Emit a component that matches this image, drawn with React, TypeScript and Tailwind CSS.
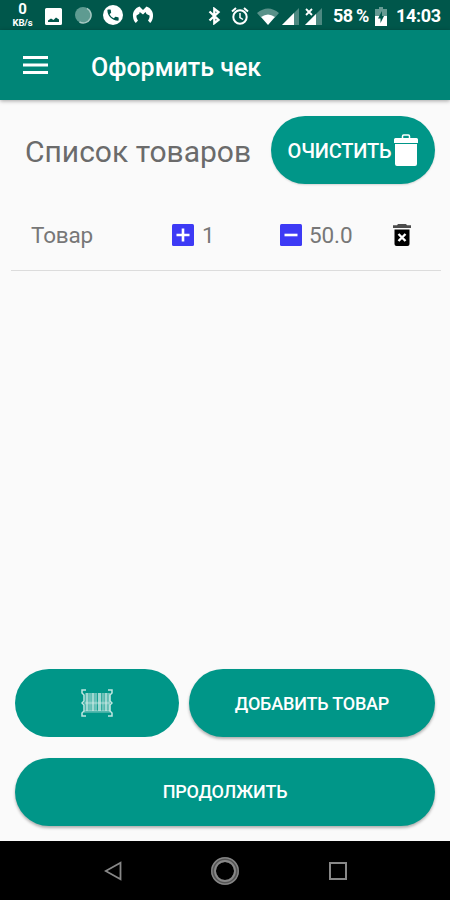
import { ButtonHTMLAttributes, FC, SVGProps } from 'react';
import { clsx } from 'clsx';

interface IProduct {
  name: string;
  count: number;
  price: number;
}

const PRODUCTS: IProduct[] = [{ name: 'Товар', count: 1, price: 50 }];

const Svg: FC<SVGProps<SVGSVGElement>> = ({ children, ...props }) => (
  <svg fill="currentColor" aria-hidden="true" {...props}>
    {children}
  </svg>
);

const StatusBar: FC = () => (
  <div className="h-[30px] shrink-0 bg-[#00574b] text-white flex items-center justify-between pl-3 pr-[10px]">
    <div className="flex items-center">
      <div className="w-[21px] flex flex-col items-center font-bold">
        <span className="text-[15px] leading-[15px]">0</span>
        <span className="text-[9.500px] leading-[11px] tracking-[-0.1px]">
          KB/s
        </span>
      </div>
      <Svg className="ml-3 mt-[2px]" width="17" height="17" viewBox="0 0 17 17">
        <path
          fillRule="evenodd"
          d="M1.500 0h14a1.500 1.500 0 0 1 1.500 1.500v14a1.500 1.500 0 0 1-1.500 1.500h-14A1.500 1.500 0 0 1 0 15.500v-14A1.500 1.500 0 0 1 1.500 0ZM3 14h11V11.500L11 9.500 8.500 12 6 10.500 3 12.500Z"
        />
      </Svg>
      <Svg className="ml-3" width="18" height="18" viewBox="0 0 18 18">
        <circle cx="9" cy="9" r="8" fill="#5e9b91" />
        <path
          d="M13 2.300A7.800 7.800 0 0 1 5.500 16"
          fill="none"
          stroke="#a9cbc5"
          strokeWidth="1.500"
        />
      </Svg>
      <Svg className="ml-[11px]" width="20" height="20" viewBox="0 0 20 20">
        <circle cx="10" cy="10" r="10" />
        <path
          transform="translate(2.500 2.500) scale(.625)"
          fill="#00574b"
          d="M6.620 10.790c1.440 2.830 3.760 5.140 6.590 6.590l2.200-2.200c.27-.27.67-.36 1.020-.24 1.120.37 2.330.57 3.570.57.55 0 1 .45 1 1V20c0 .55-.45 1-1 1C10.610 21 3 13.390 3 4c0-.55.45-1 1-1h3.500c.55 0 1 .45 1 1 0 1.250.2 2.450.57 3.570.11.35.03.74-.25 1.020z"
        />
      </Svg>
      <Svg className="ml-[9px]" width="22" height="20" viewBox="0 0 22 20">
        <path d="M7.500 1.500C3 3 .5 7 1 11.500c.2 2.800 1.200 5 2.800 6.500L6 15.500C4.800 14 4.200 12 4.500 10.500l2.800-1.700.4-1.800L11 9.500l2.500-2.500 1 2 3 1.500c.3 1.500-.3 3.500-1.500 5l2.200 2.500c1.600-1.500 2.600-3.700 2.800-6.500C21.500 7 19 3 14.500 1.500L11 5Z" />
      </Svg>
    </div>
    <div className="flex items-center">
      <Svg
        className="mt-[2px]"
        width="13"
        height="18"
        viewBox="0 0 13 18"
        fill="none"
        stroke="currentColor"
        strokeWidth="2.300"
      >
        <path d="M1.500 4.500 10.500 13 6.300 16.200V1.800L10.500 5 1.500 13.500" />
      </Svg>
      <Svg
        className="ml-[10px] mt-px"
        width="18"
        height="18"
        viewBox="0 0 18 18"
        fill="none"
        stroke="currentColor"
        strokeWidth="2"
      >
        <circle cx="9" cy="10" r="6.700" />
        <path d="M1 4.500 5 1M17 4.500 13 1" />
        <path d="M9 6v4.500l3 2" strokeWidth="1.500" />
      </Svg>
      <Svg className="ml-2 mt-[2px]" width="22" height="17" viewBox="0 0 22 17">
        <path d="M0 5Q11-4 22 5l-4 4.500Q11 5 4 9.500Z" opacity=".35" />
        <path d="M4 9q7-5 14 0l-7 8Z" />
      </Svg>
      <Svg className="ml-[3px] mt-[2px]" width="17" height="17" viewBox="0 0 17 17">
        <path d="M17 0v17H0Z" opacity=".3" />
        <path d="M12 5v12H0Z" />
      </Svg>
      <Svg className="ml-[6px] mt-[2px]" width="17" height="17" viewBox="0 0 17 17">
        <path d="M17 0v17H0Z" opacity=".3" />
        <path d="M11 6v11H0Z" />
        <path
          d="M1 1 7 7M7 1 1 7"
          stroke="currentColor"
          strokeWidth="1.800"
        />
      </Svg>
      <span className="ml-[11px] w-[37px] mt-[2px] text-[18px] leading-none font-bold whitespace-nowrap tracking-[-0.7px]">
        58 %
      </span>
      <Svg className="ml-[5px] mt-[2px]" width="12" height="19" viewBox="0 0 12 19">
        <path d="M4 0h4v2h4v8H0V2h4Z" opacity=".4" />
        <path d="M0 9h12v10H0Z" />
        <path d="M7 4 3 11.500h2.500V16L9 9H7Z" fill="#00574b" />
      </Svg>
      <span className="ml-[9px] w-[44px] mt-[2px] text-[18px] leading-none font-bold whitespace-nowrap tracking-[-0.3px]">
        14:03
      </span>
    </div>
  </div>
);

const AppBar: FC = () => (
  <header className="h-[70px] shrink-0 bg-[#008577] text-white flex items-center shadow-[0_1px_4px_rgba(0,0,0,0.35)]">
    <button aria-label="Меню" className="ml-[23px]">
      <Svg width="25" height="18" viewBox="0 0 25 18">
        <path d="M0 0h25v3H0ZM0 7.500h25v3H0ZM0 15h25v3H0Z" />
      </Svg>
    </button>
    <h1 className="ml-[43px] mt-[5px] text-[25px] font-medium whitespace-nowrap">
      Оформить чек
    </h1>
  </header>
);

const PillButton: FC<ButtonHTMLAttributes<HTMLButtonElement>> = ({
  children,
  className,
  ...props
}) => (
  <button
    {...props}
    className={clsx(
      'h-[68px] rounded-full bg-[#009688] text-white font-medium whitespace-nowrap flex items-center justify-center',
      className
    )}
  >
    {children}
  </button>
);

const TrashIcon: FC = () => (
  <Svg width="24" height="32" viewBox="0 0 24 32">
    <path
      d="M8.500 4V2.200Q8.500 1 9.700 1h4.600q1.200 0 1.200 1.200V4"
      fill="none"
      stroke="currentColor"
      strokeWidth="1.500"
    />
    <path d="M1.500 4h21Q24 4 24 5.500V9H0V5.500Q0 4 1.500 4ZM1 10h22v20q0 2-2 2H3q-2 0-2-2Z" />
  </Svg>
);

const BarcodeIcon: FC = () => (
  <Svg width="32" height="28" viewBox="0 0 32 28" fill="none" stroke="#d5eeea">
    <path
      d="M5 1H1v3l2 2v6l-2 2 2 2v6l-2 2v3h4M27 1h4v3l-2 2v6l2 2-2 2v6l2 2v3h-4"
      strokeWidth="1.500"
      opacity=".9"
    />
    <path d="M6 4v18M12 4v18M18.500 4v18M25 4v18" strokeWidth="3" opacity=".75" />
    <path d="M9 4v18M15 4v18M21.800 4v18M28 4v18" strokeWidth="2.500" opacity=".5" />
    <path d="M3 22.500h26M3 14h26" strokeWidth="2.500" opacity=".4" />
  </Svg>
);

const CounterIcon: FC<{ path: string }> = ({ path }) => (
  <Svg width="22" height="22" viewBox="0 0 22 22">
    <rect width="22" height="22" rx="1.500" fill="#3d3af5" />
    <path d={path} stroke="white" strokeWidth="2.600" />
  </Svg>
);

const ProductRow: FC<{ product: IProduct }> = ({ product }) => (
  <li className="h-[71px] ml-[11px] mr-[9px] pl-5 border-b border-[#dcdcdc] flex items-center text-[#777] text-[22.500px]">
    <span className="w-[141px] mt-[2px] tracking-[-0.2px]">{product.name}</span>
    <button aria-label="Добавить" className="mb-px">
      <CounterIcon path="M11 4.500v13M4.500 11h13" />
    </button>
    <span className="ml-2 mt-[2px] w-[78px]">{product.count}</span>
    <button aria-label="Убавить" className="mb-px">
      <CounterIcon path="M4.500 11h13" />
    </button>
    <span className="ml-[7px] mt-[2px] w-[84px] tracking-[-0.1px]">
      {product.price.toFixed(1)}
    </span>
    <button aria-label="Удалить" className="mb-px text-black">
      <Svg width="18" height="22" viewBox="0 0 18 22">
        <path d="M5 0h8l1 1.200h4V4H0V1.200h4Z" opacity=".7" />
        <path d="M1.500 5.500h15V20q0 2-2 2h-11q-2 0-2-2Z" />
        <path
          d="m5.500 10 7 7M12.500 10l-7 7"
          stroke="white"
          strokeWidth="2.400"
        />
      </Svg>
    </button>
  </li>
);

const NavigationBar: FC = () => (
  <nav className="h-[59px] shrink-0 bg-black text-[#888] flex items-center">
    <Svg
      className="ml-[104px]"
      width="18"
      height="20"
      viewBox="0 0 18 20"
      fill="none"
      stroke="currentColor"
      strokeWidth="1.800"
    >
      <path d="M16.500 1.700v16.600L1.700 10Z" />
    </Svg>
    <Svg
      className="ml-[89px]"
      width="28"
      height="28"
      viewBox="0 0 28 28"
      fill="none"
      stroke="currentColor"
    >
      <circle cx="14" cy="14" r="11.500" strokeWidth="5" stroke="#555" />
      <circle cx="14" cy="14" r="13.200" strokeWidth="1.300" />
      <circle cx="14" cy="14" r="10" strokeWidth="1.800" />
    </Svg>
    <Svg
      className="ml-[90px]"
      width="18"
      height="18"
      viewBox="0 0 18 18"
      fill="none"
      stroke="currentColor"
      strokeWidth="2"
    >
      <path d="M1 1h16v16H1Z" />
    </Svg>
  </nav>
);

const App: FC = () => {
  return (
    <div className="w-[450px] h-[900px] bg-[#fafafa] flex flex-col overflow-hidden font-['Roboto',sans-serif]">
      <StatusBar />
      <AppBar />
      <main className="flex-1 flex flex-col">
        <div className="mt-[15.500px] pl-[25px] pr-[15px] flex items-center justify-between">
          <h2 className="text-[30px] text-[#6b6b6b] whitespace-nowrap mt-[3px]">
            Список товаров
          </h2>
          <PillButton className="w-[164px] text-[20px] gap-[3px] shadow-[0_1px_2px_rgba(0,0,0,0.15)]">
            <span className="mt-[2px] tracking-[-0.2px]">ОЧИСТИТЬ</span>
            <TrashIcon />
          </PillButton>
        </div>
        <ul className="mt-[16.500px]">
          {PRODUCTS.map((product) => (
            <ProductRow key={product.name} product={product} />
          ))}
        </ul>
        <div className="mt-auto px-[15px] pb-[15.500px] flex flex-col gap-[21px] text-[18px] tracking-[-0.2px]">
          <div className="flex gap-[10px]">
            <PillButton aria-label="Сканировать" className="w-[164px]">
              <BarcodeIcon />
            </PillButton>
            <PillButton className="flex-1 shadow-[0_2px_3px_rgba(0,0,0,0.3)]">
              <span className="mt-px">ДОБАВИТЬ ТОВАР</span>
            </PillButton>
          </div>
          <PillButton className="w-full shadow-[0_2px_3px_rgba(0,0,0,0.3)]">
            ПРОДОЛЖИТЬ
          </PillButton>
        </div>
      </main>
      <NavigationBar />
    </div>
  );
};

export default App;
